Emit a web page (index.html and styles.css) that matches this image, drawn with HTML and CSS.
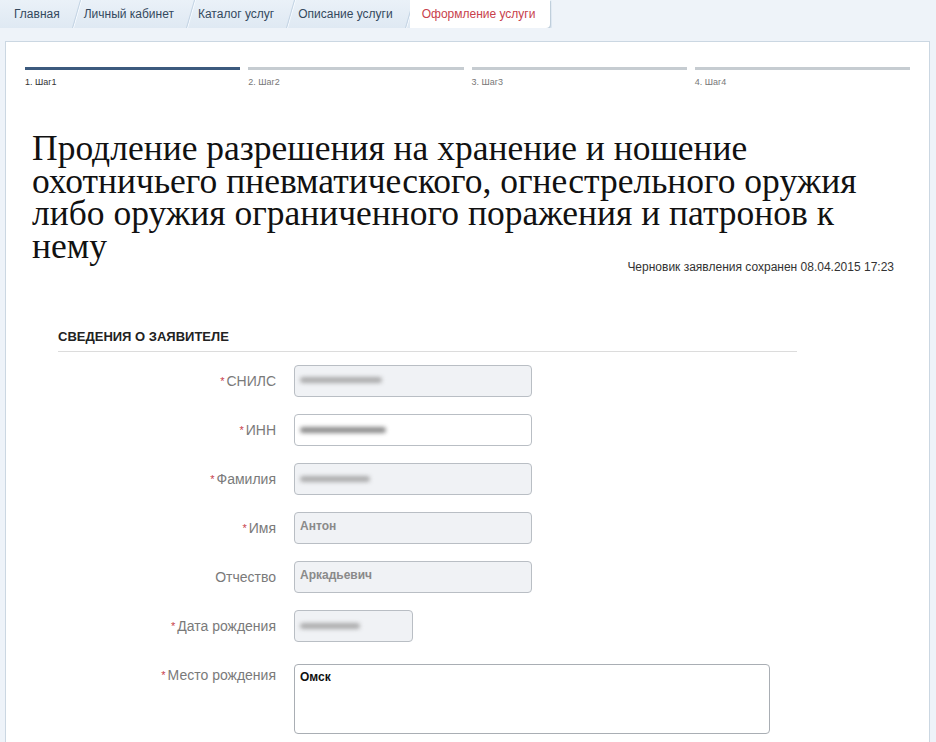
FILE: index.html
```html
<!DOCTYPE html>
<html lang="ru">
<head>
<meta charset="utf-8">
<title>Оформление услуги</title>
<link rel="stylesheet" href="styles.css">
</head>
<body>
<nav class="crumbs">
  <a class="crumb first">Главная</a>
  <a class="crumb">Личный кабинет</a>
  <a class="crumb">Каталог услуг</a>
  <a class="crumb">Описание услуги</a>
  <a class="crumb active">Оформление услуги</a>
</nav>
<main class="panel">
  <div class="steps">
    <div class="step done"><div class="bar"></div><span>1. Шаг1</span></div>
    <div class="step"><div class="bar"></div><span>2. Шаг2</span></div>
    <div class="step"><div class="bar"></div><span>3. Шаг3</span></div>
    <div class="step"><div class="bar"></div><span>4. Шаг4</span></div>
  </div>
  <h1 class="title">Продление разрешения на хранение и ношение охотничьего пневматического, огнестрельного оружия либо оружия ограниченного поражения и патронов к нему</h1>
  <div class="draft">Черновик заявления сохранен 08.04.2015 17:23</div>
  <section class="form">
    <h2 class="section">СВЕДЕНИЯ О ЗАЯВИТЕЛЕ</h2>
    <div class="row">
      <label class="label"><span class="req">*</span>СНИЛС</label>
      <div class="input disabled"><span class="blur b1"></span></div>
    </div>
    <div class="row">
      <label class="label"><span class="req">*</span>ИНН</label>
      <div class="input"><span class="blur b2"></span></div>
    </div>
    <div class="row">
      <label class="label"><span class="req">*</span>Фамилия</label>
      <div class="input disabled"><span class="blur b3"></span></div>
    </div>
    <div class="row">
      <label class="label"><span class="req">*</span>Имя</label>
      <div class="input disabled"><span class="val">Антон</span></div>
    </div>
    <div class="row">
      <label class="label">Отчество</label>
      <div class="input disabled"><span class="val">Аркадьевич</span></div>
    </div>
    <div class="row">
      <label class="label"><span class="req">*</span>Дата рождения</label>
      <div class="input disabled short"><span class="blur b4"></span></div>
    </div>
    <div class="row top">
      <label class="label"><span class="req">*</span>Место рождения</label>
      <div class="textarea">Омск</div>
    </div>
  </section>
</main>
</body>
</html>
```

FILE: styles.css
```css
html, body {
  margin: 0;
  padding: 0;
}
body {
  background: #eef3f9;
  font-family: "Liberation Sans", Arial, sans-serif;
  width: 936px;
  height: 742px;
  overflow: hidden;
}
.crumbs {
  display: flex;
  height: 28px;
  align-items: stretch;
  background: linear-gradient(#eaf1f8, #dfe9f3);
  width: 552px;
  overflow: hidden;
}
.crumb {
  position: relative;
  display: flex;
  align-items: center;
  padding: 0 12px 0 12px;
  font-size: 12px;
  color: #34495e;
  z-index: 1;
}
.crumb.first {
  padding-left: 14px;
}
.crumb::after {
  content: "";
  position: absolute;
  right: -5px;
  top: 0;
  bottom: 0;
  width: 0;
  border-right: 1px solid #c3d3e3;
  box-shadow: 1px 0 0 #f7fbff;
  transform: skewX(-16deg);
}
.crumb.active {
  color: #c8414c;
  padding: 0 15px 0 17px;
}
.crumb.active::after {
  display: none;
}
.crumb.active::before {
  content: "";
  position: absolute;
  left: 5px;
  right: 0;
  top: 0;
  bottom: 0;
  background: #fff;
  border-bottom-right-radius: 4px;
  box-shadow: 1px 1px 1px #bccbd9;
  z-index: -1;
}
.panel {
  margin: 13px 0 0 5px;
  width: 925px;
  height: 720px;
  background: #fff;
  border: 1px solid #cbd7e2;
  box-sizing: border-box;
  padding: 25px 19px 0 19px;
}
.steps {
  display: grid;
  grid-template-columns: repeat(4, 1fr);
  gap: 8px;
}
.step .bar {
  height: 3px;
  background: #c6ccd1;
}
.step.done .bar {
  background: #3c5a7e;
}
.step span {
  display: block;
  margin-top: 6px;
  font-size: 9px;
  color: #777;
  line-height: 12px;
}
.step.done span {
  color: #333;
}
.title {
  margin: 44px 0 0 7px;
  font-family: "Liberation Serif", "Times New Roman", serif;
  font-weight: normal;
  font-size: 35.5px;
  line-height: 32.5px;
  color: #111;
  width: 840px;
}
.draft {
  text-align: right;
  font-size: 12px;
  color: #333;
  line-height: 14px;
  margin: -2px 16px 0 0;
}
.form {
  width: 739px;
  margin: 55px 0 0 33px;
}
.section {
  margin: 0;
  font-size: 13px;
  font-weight: bold;
  color: #222;
  line-height: 16px;
  padding-bottom: 6px;
  border-bottom: 1px solid #dcdcdc;
  margin-bottom: 13px;
}
.row {
  display: flex;
  align-items: center;
  gap: 18px;
  margin-bottom: 17px;
}
.row.top {
  align-items: flex-start;
  margin-top: 22px;
}
.label {
  width: 218px;
  text-align: right;
  font-size: 14px;
  color: #7a7a7a;
  line-height: 18px;
}
.row.top .label {
  padding-top: 2px;
}
.req {
  color: #c8414c;
  font-size: 11px;
  vertical-align: top;
  margin-right: 2px;
}
.input {
  width: 238px;
  height: 32px;
  box-sizing: border-box;
  border: 1px solid #b9bec4;
  border-radius: 4px;
  background: #fff;
  display: flex;
  align-items: center;
  padding-left: 5px;
}
.input.disabled {
  background: #f0f2f5;
}
.input.short {
  width: 119px;
}
.val {
  font-size: 12px;
  font-weight: bold;
  color: #8a8a8a;
  margin-top: -4px;
}
.blur {
  display: block;
  height: 6px;
  background: #9a9a9a;
  border-radius: 3px;
  filter: blur(2px);
  opacity: 0.8;
}
.b1 { width: 82px; margin-top: -2px; }
.b2 { width: 86px; background: #6e6e6e; }
.b3 { width: 70px; }
.b4 { width: 60px; }
.textarea {
  width: 476px;
  height: 70px;
  box-sizing: border-box;
  border: 1px solid #a9aeb4;
  border-radius: 4px;
  background: #fff;
  padding: 5px 5px;
  font-size: 12px;
  font-weight: bold;
  color: #111;
}
```
